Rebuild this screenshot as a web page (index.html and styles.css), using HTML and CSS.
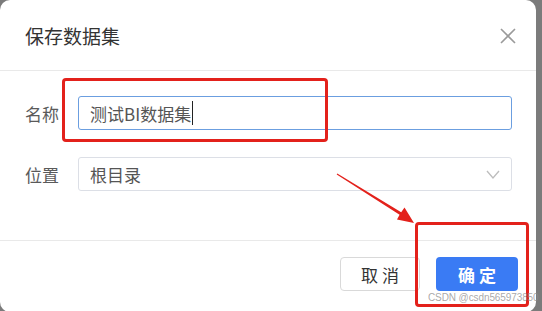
FILE: index.html
```html
<!DOCTYPE html>
<html lang="zh">
<head>
<meta charset="utf-8">
<title>保存数据集</title>
<link rel="stylesheet" href="styles.css">
</head>
<body>
<div class="backdrop">
  <div class="dialog">
    <header class="dlg-head">
      <h2 class="dlg-title">保存数据集</h2>
      <span class="dlg-close">
        <svg width="16" height="16" viewBox="0 0 16 16"><path d="M1 1 L15 15 M15 1 L1 15" stroke="#9a9a9a" stroke-width="1.6" fill="none"/></svg>
      </span>
    </header>
    <div class="dlg-body">
      <div class="form-row">
        <span class="form-label">名称</span>
        <div class="field field-focus"><span class="field-text">测试BI数据集</span><span class="caret"></span></div>
      </div>
      <div class="form-row">
        <span class="form-label">位置</span>
        <div class="field field-select"><span class="field-text">根目录</span>
          <svg class="chev" width="14" height="9" viewBox="0 0 14 9"><path d="M1 1 L7 8 L13 1" stroke="#bdbdbd" stroke-width="1.3" fill="none"/></svg>
        </div>
      </div>
    </div>
    <footer class="dlg-foot">
      <span class="btn btn-default">取 消</span>
      <span class="btn btn-primary">确 定</span>
    </footer>
  </div>
  <div class="mark mark-name"></div>
  <div class="mark mark-ok"></div>
  <svg class="arrow" width="542" height="311" viewBox="0 0 542 311">
    <polygon fill="#e3211b" points="336.7,174.4 337.3,173.6 401.2,212.2 404.5,207.5 414,223 397,219.5 399.6,214.8"/>
  </svg>
  <div class="watermark">CSDN @csdn565973850</div>
</div>
</body>
</html>
```
FILE: styles.css
```css
html, body {
  margin: 0;
  padding: 0;
}
body {
  width: 542px;
  height: 311px;
  overflow: hidden;
  font-family: "Noto Sans CJK SC", "Noto Sans", sans-serif;
}
.backdrop {
  position: relative;
  width: 542px;
  height: 311px;
  background: #7b7b7b;
}
.dialog {
  width: 536px;
  height: 312px;
  background: #fff;
  border-radius: 10px;
  display: flex;
  flex-direction: column;
  overflow: hidden;
}
.dlg-head {
  height: 70px;
  border-bottom: 1px solid #e9e9e9;
  display: flex;
  align-items: center;
  justify-content: space-between;
  padding: 0 20px 0 25px;
  flex-shrink: 0;
}
.dlg-title {
  margin: 0;
  font-size: 19px;
  font-weight: 400;
  color: #333;
  line-height: 1;
  padding-top: 1px;
}
.dlg-close {
  display: flex;
  width: 16px;
  height: 16px;
  margin-top: 2px;
}
.dlg-body {
  display: flex;
  flex-direction: column;
  gap: 27px;
  padding: 25px 24px 0 25px;
  height: 170px;
  box-sizing: border-box;
  border-bottom: 1px solid #e9e9e9;
  flex-shrink: 0;
}
.form-row {
  display: flex;
  align-items: center;
  height: 34px;
}
.form-label {
  width: 53px;
  font-size: 17px;
  color: #5a5a5a;
  flex-shrink: 0;
}
.field {
  flex: 1;
  height: 34px;
  box-sizing: border-box;
  border: 1px solid #dcdfe6;
  border-radius: 3px;
  display: flex;
  align-items: center;
  padding: 0 11px;
  font-size: 17px;
  color: #555;
}
.field-focus {
  border-color: #6b9ee0;
}
.caret {
  display: inline-block;
  width: 1px;
  height: 24px;
  background: #222;
  margin-left: 1px;
}
.field-select {
  justify-content: space-between;
}
.dlg-foot {
  display: flex;
  justify-content: flex-end;
  gap: 16px;
  padding: 16px 18px 0 0;
}
.btn {
  display: flex;
  align-items: center;
  justify-content: center;
  height: 34px;
  box-sizing: border-box;
  border-radius: 4px;
  font-size: 17px;
  white-space: pre;
}
.btn-default {
  width: 80px;
  border: 1px solid #d9d9d9;
  color: #333;
  background: #fff;
}
.btn-primary {
  width: 82px;
  background: #3a7bf4;
  color: #fff;
  font-weight: 700;
}
.mark {
  position: absolute;
  border: 3px solid #e3211b;
  border-radius: 4px;
  box-sizing: border-box;
}
.mark-name {
  left: 62px;
  top: 78px;
  width: 266px;
  height: 64px;
}
.mark-ok {
  left: 415px;
  top: 222px;
  width: 114px;
  height: 85px;
}
.arrow {
  position: absolute;
  left: 0;
  top: 0;
  pointer-events: none;
}
.watermark {
  position: absolute;
  left: 428px;
  top: 292px;
  font-family: "Liberation Sans", sans-serif;
  font-size: 10px;
  letter-spacing: -0.1px;
  color: rgba(140, 140, 140, 0.75);
  white-space: nowrap;
}
```
